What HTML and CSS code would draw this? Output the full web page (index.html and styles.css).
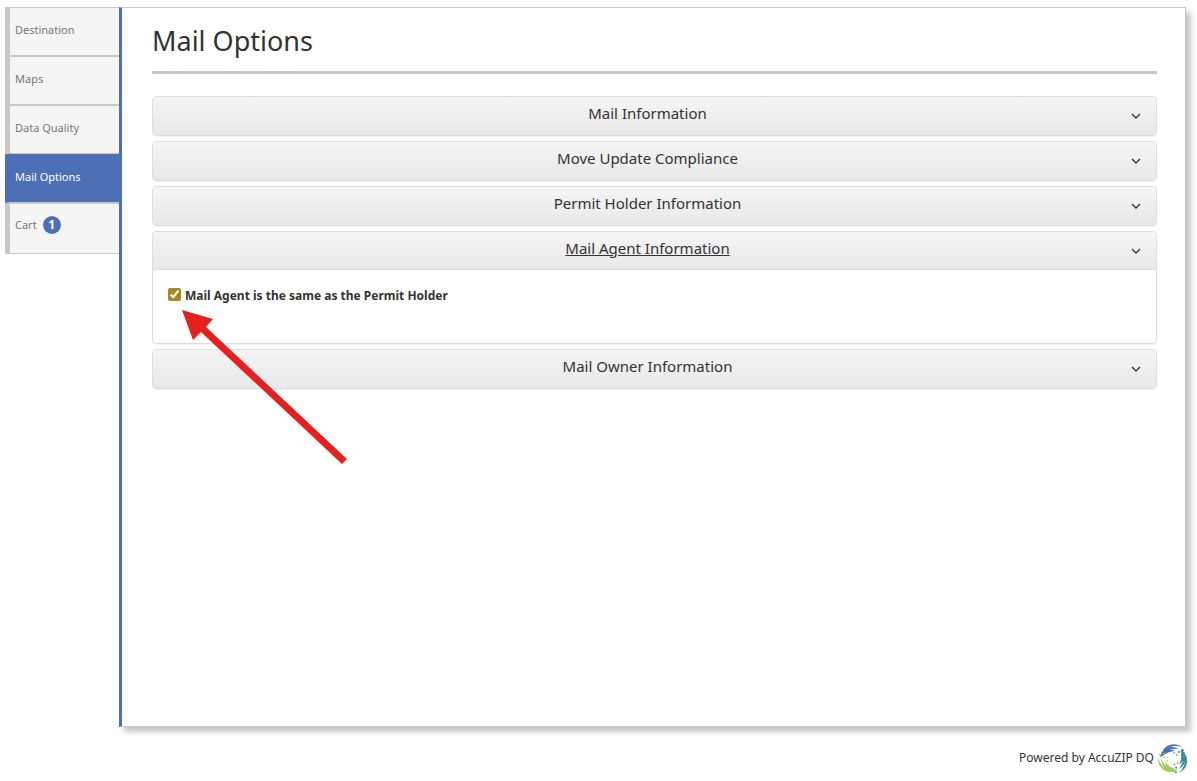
FILE: index.html
```html
<!DOCTYPE html>
<html lang="en">
<head>
    <meta charset="utf-8">
    <title>Mail Options</title>
    <link rel="stylesheet" href="styles.css">
</head>
<body>
    <div class="wrapper">
        <nav class="steps">
            <a href="#">Destination</a>
            <a href="#">Maps</a>
            <a href="#">Data Quality</a>
            <a href="#" class="active">Mail Options</a>
            <a href="#">Cart <span class="badge">1</span></a>
        </nav>

        <main class="content">
            <h1>Mail Options</h1>

            <section class="panel">
                <button type="button" class="panel-heading">
                    <span>Mail Information</span>
                    <svg class="chevron" viewBox="0 0 10 6"><path d="M1 1l4 4 4-4"/></svg>
                </button>
            </section>
            <section class="panel">
                <button type="button" class="panel-heading">
                    <span>Move Update Compliance</span>
                    <svg class="chevron" viewBox="0 0 10 6"><path d="M1 1l4 4 4-4"/></svg>
                </button>
            </section>
            <section class="panel">
                <button type="button" class="panel-heading">
                    <span>Permit Holder Information</span>
                    <svg class="chevron" viewBox="0 0 10 6"><path d="M1 1l4 4 4-4"/></svg>
                </button>
            </section>
            <section class="panel open">
                <button type="button" class="panel-heading" aria-expanded="true">
                    <span>Mail Agent Information</span>
                    <svg class="chevron" viewBox="0 0 10 6"><path d="M1 1l4 4 4-4"/></svg>
                </button>
                <div class="panel-body">
                    <div class="check">
                        <input type="checkbox" id="sameAgent" checked>
                        <label for="sameAgent">Mail Agent is the same as the Permit Holder</label>
                        <svg class="arrow" viewBox="0 0 170 160">
                            <path d="M4 4L35 13L28 21L169 153L164 158L23 26L15 34Z"/>
                        </svg>
                    </div>
                </div>
            </section>
            <section class="panel">
                <button type="button" class="panel-heading">
                    <span>Mail Owner Information</span>
                    <svg class="chevron" viewBox="0 0 10 6"><path d="M1 1l4 4 4-4"/></svg>
                </button>
            </section>
        </main>
    </div>

    <footer>
        <span>Powered by AccuZIP DQ</span>
        <svg class="logo" viewBox="0 0 32 32">
            <defs>
                <g id="swirl">
                    <path d="M6 7C10 1 18 -1 25 4C19 2 13 3 8 7Z"/>
                    <path d="M4 10C8 4 15 2 22 6C15 5 10 7 5 11Z"/>
                    <path d="M3 13C7 7 12 5 18 8C13 8 9 10 4 14Z"/>
                    <circle cx="26" cy="7" r="1"/>
                    <circle cx="22" cy="9" r="1"/>
                    <circle cx="25" cy="11" r="0.9"/>
                    <circle cx="17" cy="10" r="0.8"/>
                    <circle cx="20" cy="12" r="0.8"/>
                </g>
            </defs>
            <use href="#swirl" class="blue"/>
            <use href="#swirl" class="teal" transform="rotate(120 16 16)"/>
            <use href="#swirl" class="green" transform="rotate(240 16 16)"/>
        </svg>
    </footer>
</body>
</html>
```
FILE: styles.css
```css
:root {
    --blue: #4c6fb6;
    --grey: #c8c8c8;
    --text-color: #333;
}

* {
    box-sizing: border-box;
}

body {
    margin: 0;
    padding: 7px 11px 0 5px;
    font-family: "Noto Sans", "Open Sans", sans-serif;
    font-size: 12px;
    color: var(--text-color);
    background: #fff;
}

.wrapper {
    display: flex;
    align-items: flex-start;
}

.steps {
    flex: 0 0 114px;
    display: flex;
    flex-direction: column;
}

.steps a {
    display: flex;
    align-items: center;
    gap: 6px;
    min-height: 49px;
    padding: 0 5px 4px;
    border: solid var(--grey);
    border-width: 1px 0 1px 5px;
    background: #f5f5f5;
    color: #777;
    font-size: 11px;
    text-decoration: none;
}

.steps a:last-child {
    padding-bottom: 8px;
    min-height: 51px;
}

.steps a.active {
    background: var(--blue);
    border-top-color: var(--blue);
    border-left-color: var(--blue);
    color: #fff;
}

.badge {
    width: 18px;
    height: 18px;
    border-radius: 50%;
    background: var(--blue);
    color: #fff;
    font-size: 12px;
    font-weight: 700;
    line-height: 18px;
    text-align: center;
}

.content {
    flex: 1;
    min-height: calc(100vh - 61px);
    padding: 11px 28px 20px 30px;
    border: 1px solid var(--grey);
    border-left: 3px solid var(--blue);
    box-shadow: 5px 5px 5px #c8c8c8;
}

h1 {
    margin: 0 0 22px;
    padding-bottom: 8px;
    border-bottom: 3px solid var(--grey);
    font-size: 27px;
    font-weight: 400;
    line-height: 44px;
}

.panel {
    margin-bottom: 5px;
    border: 1px solid #ddd;
    border-radius: 4px;
    box-shadow: 0 1px 1px rgba(0, 0, 0, 0.05);
}

.panel-heading {
    display: flex;
    align-items: center;
    gap: 4px;
    width: 100%;
    height: 38px;
    padding: 0 15px;
    border: 0;
    border-radius: 3px;
    background: linear-gradient(#f5f5f5, #e8e8e8);
    color: var(--text-color);
    font-family: inherit;
    font-size: 15px;
    cursor: pointer;
}

.panel-heading span {
    flex: 1;
    padding-bottom: 6px;
}

.chevron {
    width: 10px;
    height: 6px;
    fill: none;
    stroke: var(--text-color);
    stroke-width: 1.3;
}

.open .panel-heading {
    border-bottom: 1px solid #ddd;
    border-radius: 3px 3px 0 0;
}

.open .panel-heading span {
    text-decoration: underline;
}

.panel-body {
    min-height: 73px;
    padding: 16px 15px;
}

.check {
    position: relative;
    display: flex;
    align-items: center;
    gap: 4px;
    font-weight: 700;
    line-height: 20px;
}

.check input {
    width: 13px;
    height: 13px;
    margin: 0 0 3px;
    accent-color: #a8871c;
}

/* pointer lies over the panels below */
.arrow {
    position: absolute;
    top: 20px;
    left: 10px;
    width: 170px;
    height: 160px;
    fill: #e5201f;
    pointer-events: none;
}

footer {
    display: flex;
    justify-content: flex-end;
    align-items: center;
    gap: 3px;
    padding-top: 16px;
    margin-right: -3px;
}

footer span {
    padding-bottom: 4px;
}

.logo {
    width: 32px;
    height: 32px;
}

.blue {
    fill: #4771b2;
}

.teal {
    fill: #3c8ba0;
}

.green {
    fill: #9fce52;
}
```
